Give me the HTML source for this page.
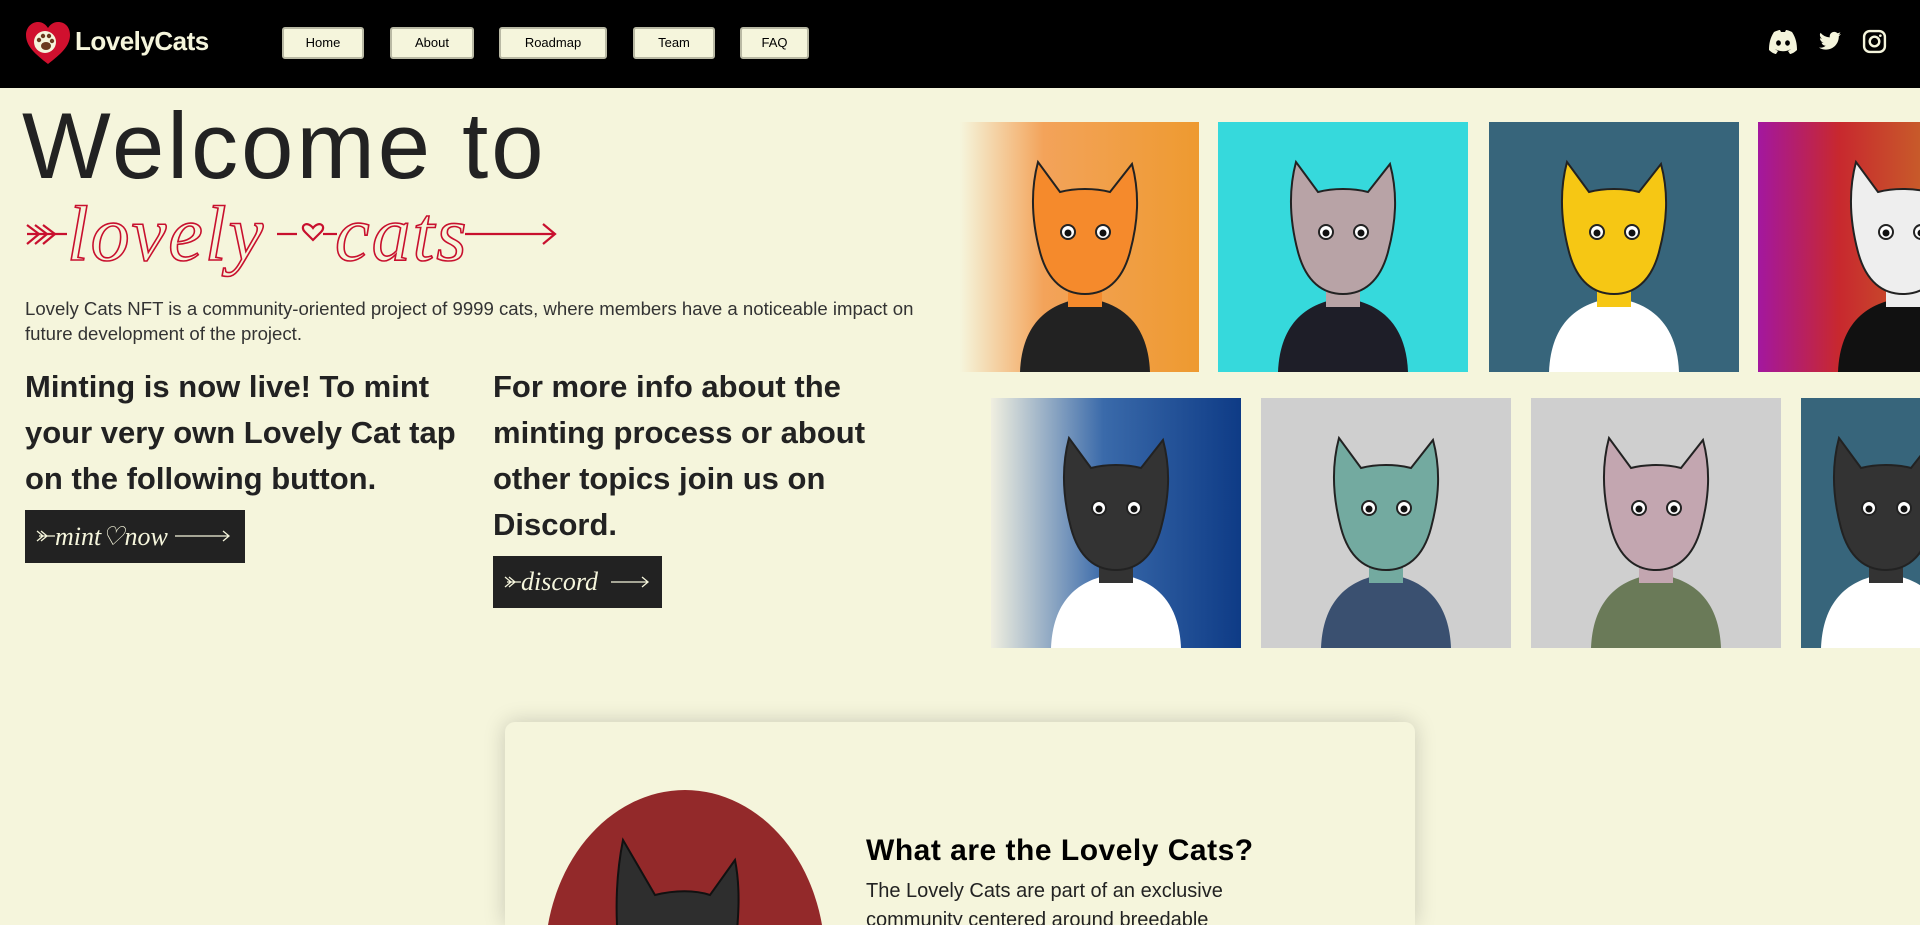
<!DOCTYPE html>
<html style="width:1920px;height:925px;overflow:hidden"><head><meta charset="utf-8"><style>
*{margin:0;padding:0;box-sizing:border-box}
body{width:1920px;height:925px;overflow:hidden;background:#f5f5dc;font-family:"Liberation Sans",sans-serif;color:#222;position:relative}
header{position:absolute;left:0;top:0;width:1920px;height:88px;background:#000;z-index:2}
.logo{position:absolute;left:25px;top:22px}
.logotext{position:absolute;left:75px;top:26px;color:#f5f5dc;font-weight:bold;font-size:26px;letter-spacing:-0.5px}
.nav{position:absolute;top:27px;height:32px;background:#f5f5dc;border:2px solid #b9b9a4;border-radius:3px;font-size:13px;text-align:center;line-height:28px;color:#000}
.icons svg{position:absolute;top:29px}
h1{position:absolute;left:22px;top:92px;font-size:94px;font-weight:normal;letter-spacing:3px;color:#222;white-space:nowrap}
.p{position:absolute;left:25px;top:296px;font-size:18.6px;line-height:25px;color:#333;white-space:nowrap}
.h{position:absolute;top:364px;font-size:31px;font-weight:bold;line-height:46px;color:#222;white-space:nowrap}
.btn{position:absolute;background:#222;color:#f5f5dc}
.img{position:absolute;width:250px;height:250px;overflow:hidden}
.card{position:absolute;left:505px;top:722px;width:910px;height:203px;border-radius:10px 10px 0 0;background:#f5f5dc;box-shadow:0 0 22px rgba(0,0,0,.18);overflow:hidden}
</style></head><body>
<header>
<svg class="logo" width="46" height="44" viewBox="0 0 46 44"><path d="M23 42 C10 32 1 24 1 13 C1 5 7 0 13 0 C18 0 21 3 23 6 C25 3 28 0 33 0 C40 0 45 5 45 13 C45 24 36 32 23 42Z" fill="#d0102e"/><circle cx="20" cy="20" r="11" fill="#f5f5dc"/><ellipse cx="21" cy="24" rx="5" ry="4" fill="#6b3a1f"/><circle cx="14" cy="18" r="2.2" fill="#6b3a1f"/><circle cx="18" cy="14" r="2.2" fill="#6b3a1f"/><circle cx="24" cy="14" r="2.2" fill="#6b3a1f"/><circle cx="27" cy="19" r="2.2" fill="#6b3a1f"/></svg>
<div class="logotext">LovelyCats</div>
<div class="nav" style="left:282px;width:82px">Home</div>
<div class="nav" style="left:390px;width:84px">About</div>
<div class="nav" style="left:499px;width:108px">Roadmap</div>
<div class="nav" style="left:633px;width:82px">Team</div>
<div class="nav" style="left:740px;width:69px">FAQ</div>
<div class="icons">
<svg style="left:1768px" width="30" height="26" viewBox="0 0 30 26"><path d="M6 3 C10 1 12 1 12 1 L13 3 C14 3 16 3 17 3 L18 1 C18 1 20 1 24 3 C28 9 29 15 29 21 C26 24 23 25 22 25 L20 22 C22 21 23 20 23 20 C18 23 12 23 7 20 C7 20 8 21 10 22 L8 25 C7 25 4 24 1 21 C1 15 2 9 6 3Z" fill="#f5f5dc"/><ellipse cx="10.5" cy="14" rx="2.4" ry="2.7" fill="#000"/><ellipse cx="19.5" cy="14" rx="2.4" ry="2.7" fill="#000"/></svg>
<svg style="left:1817px" width="26" height="24" viewBox="0 0 24 24"><path d="M23 5c-.8.4-1.7.6-2.6.7.9-.6 1.6-1.4 2-2.5-.9.5-1.9.9-2.9 1.1A4.5 4.5 0 0 0 11.8 8.4 12.8 12.8 0 0 1 2.5 3.7a4.5 4.5 0 0 0 1.4 6 4.5 4.5 0 0 1-2-.6 4.5 4.5 0 0 0 3.6 4.4 4.5 4.5 0 0 1-2 .1 4.5 4.5 0 0 0 4.2 3.1A9 9 0 0 1 1 18.6 12.8 12.8 0 0 0 8 20.6c8.3 0 12.8-6.9 12.8-12.8v-.6c.9-.6 1.6-1.4 2.2-2.2z" fill="#f5f5dc"/></svg>
<svg style="left:1862px" width="25" height="25" viewBox="0 0 24 24"><rect x="2" y="2" width="20" height="20" rx="5.5" fill="none" stroke="#f5f5dc" stroke-width="2.3"/><circle cx="12" cy="12" r="4.6" fill="none" stroke="#f5f5dc" stroke-width="2.3"/><circle cx="17.6" cy="6.4" r="1.3" fill="#f5f5dc"/></svg>
</div>
</header>

<h1>Welcome to</h1>
<svg style="position:absolute;left:25px;top:190px" width="535" height="95" viewBox="0 0 535 95">
<g stroke="#c8102e" stroke-width="2.2" fill="none">
<path d="M2 35 L14 44 L2 54 M10 35 L22 44 L10 54 M18 35 L30 44 L18 54"/>
<path d="M2 44 L42 44"/><path d="M440 44 L530 44 M518 34 L530 44 L518 54"/>
<path d="M252 44 L272 44"/>
<path d="M288 38 C282 30 274 36 280 42 L288 50 L296 42 C302 36 294 30 288 38Z"/>
<path d="M298 44 L312 44"/>
</g>
<text x="42" y="70" font-family="Liberation Serif,serif" font-style="italic" font-size="78" fill="none" stroke="#c8102e" stroke-width="1.6" letter-spacing="2">lovely</text>
<text x="310" y="70" font-family="Liberation Serif,serif" font-style="italic" font-size="78" fill="none" stroke="#c8102e" stroke-width="1.6" letter-spacing="2">cats</text>
</svg>

<div class="p">Lovely Cats NFT is a community-oriented project of 9999 cats, where members have a noticeable impact on<br>future development of the project.</div>

<div class="h" style="left:25px">Minting is now live! To mint<br>your very own Lovely Cat tap<br>on the following button.</div>
<div class="h" style="left:493px">For more info about the<br>minting process or about<br>other topics join us on<br>Discord.</div>

<div class="btn" style="left:25px;top:510px;width:220px;height:53px"><svg width="220" height="53"><g stroke="#f5f5dc" stroke-width="1.3" fill="none"><path d="M12 21 L18 26 L12 31 M16 21 L22 26 L16 31 M14 26 L30 26 M150 26 L204 26 M198 21 L204 26 L198 31"/></g><text x="30" y="35" font-family="Liberation Serif,serif" font-style="italic" font-size="26" fill="#f5f5dc">mint♡now</text></svg></div>
<div class="btn" style="left:493px;top:556px;width:169px;height:52px"><svg width="169" height="52"><g stroke="#f5f5dc" stroke-width="1.3" fill="none"><path d="M12 21 L18 26 L12 31 M16 21 L22 26 L16 31 M14 26 L28 26 M118 26 L155 26 M149 21 L155 26 L149 31"/></g><text x="28" y="34" font-family="Liberation Serif,serif" font-style="italic" font-size="26" fill="#f5f5dc">discord</text></svg></div>

<svg width="0" height="0" style="position:absolute"><defs>
<g id="cat"><path d="M60 250 C62 200 90 180 125 176 C160 180 188 200 190 250Z" fill="var(--shirt)"/>
<path d="M108 150 L108 185 L142 185 L142 150Z" fill="var(--fur)"/>
<path d="M80 130 C72 100 70 70 78 40 L100 70 C115 66 135 66 150 70 L172 42 C180 72 178 100 170 130 C162 160 145 172 125 172 C105 172 88 160 80 130Z" fill="var(--fur)" stroke="#222" stroke-width="2"/>
<circle cx="108" cy="110" r="7" fill="#fff" stroke="#222" stroke-width="2"/><circle cx="143" cy="110" r="7" fill="#fff" stroke="#222" stroke-width="2"/><circle cx="108" cy="111" r="3.5" fill="#111"/><circle cx="143" cy="111" r="3.5" fill="#111"/></g>
</defs></svg>

<div class="img" style="left:960px;top:122px;width:239px;background:linear-gradient(90deg,#f5f5dc 0%,#f3a35a 35%,#ee9a30 100%)"><svg width="250" height="250" style="--fur:#f58a2c;--shirt:#222"><use href="#cat"/></svg></div>
<div class="img" style="left:1218px;top:122px;background:#36d9dc"><svg width="250" height="250" style="--fur:#b8a3a6;--shirt:#1e1e28"><use href="#cat"/></svg></div>
<div class="img" style="left:1489px;top:122px;background:#37657b"><svg width="250" height="250" style="--fur:#f6c714;--shirt:#fff"><use href="#cat"/></svg></div>
<div class="img" style="left:1758px;top:122px;width:162px;background:linear-gradient(90deg,#a3179f,#c8282e 50%,#c85a2a)"><svg width="250" height="250" style="--fur:#eee;--shirt:#111"><use href="#cat" x="20"/></svg></div>

<div class="img" style="left:991px;top:398px;background:linear-gradient(90deg,#f0efe0 0%,#3a6aaa 45%,#0e3b86 100%)"><svg width="250" height="250" style="--fur:#333;--shirt:#fff"><use href="#cat"/></svg></div>
<div class="img" style="left:1261px;top:398px;background:#cfcfcf"><svg width="250" height="250" style="--fur:#73aaa0;--shirt:#3a5070"><use href="#cat"/></svg></div>
<div class="img" style="left:1531px;top:398px;background:#cfcfcf"><svg width="250" height="250" style="--fur:#c3a6b0;--shirt:#6a7a58"><use href="#cat"/></svg></div>
<div class="img" style="left:1801px;top:398px;width:119px;background:#37657b"><svg width="250" height="250" style="--fur:#333;--shirt:#fff"><use href="#cat" x="-40"/></svg></div>

<div class="card">
<div style="position:absolute;left:40px;top:68px;width:280px;height:340px;border-radius:50%;background:#93292a;overflow:hidden">
<svg width="280" height="200" style="position:absolute;top:30px;left:40px"><path d="M35 140 C30 100 30 60 38 20 L70 75 C90 70 110 70 125 75 L150 40 C158 80 150 120 150 140Z" fill="#2e2e2e" stroke="#111" stroke-width="2"/><rect x="35" y="160" width="120" height="40" fill="#fff"/><rect x="50" y="165" width="40" height="25" fill="#1b7a9b"/><rect x="100" y="165" width="40" height="25" fill="#b8242a"/></svg>
</div>
<div style="position:absolute;left:361px;top:112px;font-size:30px;font-weight:bold;color:#000;letter-spacing:0.5px">What are the Lovely Cats?</div>
<div style="position:absolute;left:361px;top:155px;width:420px;font-size:20px;line-height:29px;color:#222">The Lovely Cats are part of an exclusive community centered around breedable</div>
</div>
</body></html>
